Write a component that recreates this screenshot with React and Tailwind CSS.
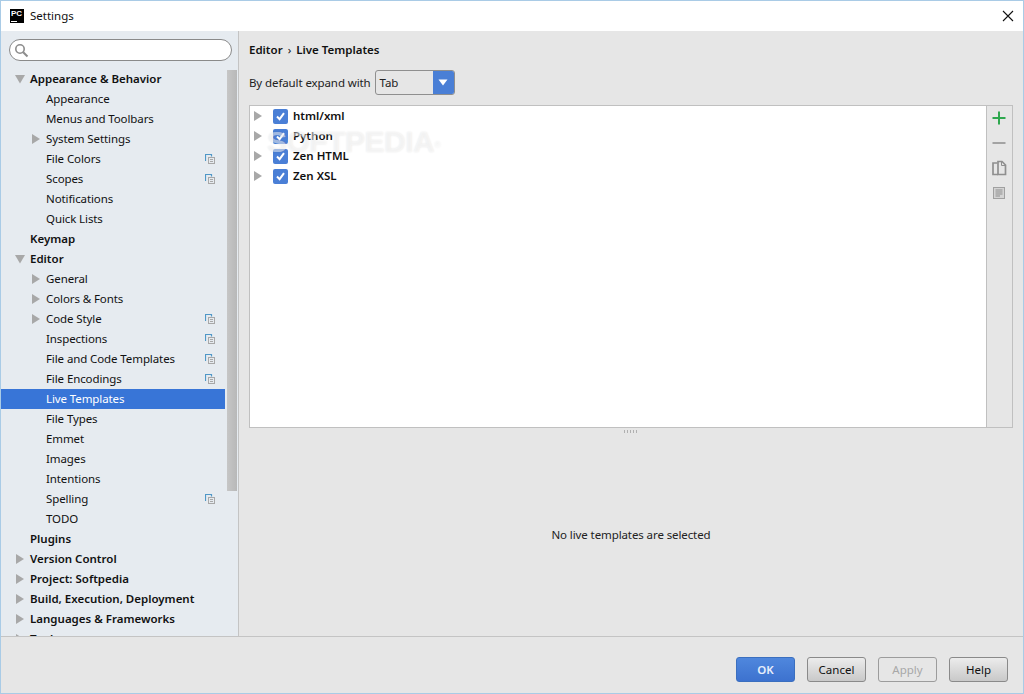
const sans = "font-['Noto_Sans','Open_Sans',sans-serif]";

function Arrow({ dir = "right", x = "" }) {
  return (
    <svg width="10" height="10" viewBox="0 0 10 10" className={`shrink-0 ${x}`}>
      {dir === "right" ? <path d="M1 0 L9 5 L1 10 Z" fill="#a8a8a8" /> : <path d="M0 1 L10 1 L5 9.5 Z" fill="#a8a8a8" />}
    </svg>
  );
}

function CopyBadge() {
  return (
    <svg width="10" height="10" viewBox="0 0 10 10" className="shrink-0">
      <path d="M0.5 7 V0.5 H6.5 V2.5" fill="none" stroke="#4f97c7" strokeWidth="1.2" />
      <rect x="3.5" y="3.5" width="6" height="6" fill="#e6ebf0" stroke="#a8a8a8" />
      <path d="M5 5.5 H8 M5 7.5 H8" stroke="#a8a8a8" strokeWidth="1" />
    </svg>
  );
}

const rows = [
  { t: "Appearance & Behavior", b: 1, a: "down" },
  { t: "Appearance" },
  { t: "Menus and Toolbars" },
  { t: "System Settings", a: "right" },
  { t: "File Colors", c: 1 },
  { t: "Scopes", c: 1 },
  { t: "Notifications" },
  { t: "Quick Lists" },
  { t: "Keymap", b: 1 },
  { t: "Editor", b: 1, a: "down" },
  { t: "General", a: "right" },
  { t: "Colors & Fonts", a: "right" },
  { t: "Code Style", a: "right", c: 1 },
  { t: "Inspections", c: 1 },
  { t: "File and Code Templates", c: 1 },
  { t: "File Encodings", c: 1 },
  { t: "Live Templates", s: 1 },
  { t: "File Types" },
  { t: "Emmet" },
  { t: "Images" },
  { t: "Intentions" },
  { t: "Spelling", c: 1 },
  { t: "TODO" },
  { t: "Plugins", b: 1 },
  { t: "Version Control", b: 1, a: "right" },
  { t: "Project: Softpedia", b: 1, a: "right" },
  { t: "Build, Execution, Deployment", b: 1, a: "right" },
  { t: "Languages & Frameworks", b: 1, a: "right" },
  { t: "Tools", b: 1, a: "right" },
];

function TreeRow({ r }) {
  const top = r.b;
  return (
    <div className={`h-5 shrink-0 flex items-center relative ${r.s ? "bg-[#3875d7] text-white" : "text-[#111]"}`}>
      <div className={`${top ? "w-[29px] pl-[14px]" : "w-[45px] pl-[30px]"} shrink-0 flex items-center`}>
        {r.a && <Arrow dir={r.a} />}
      </div>
      <span className={`text-[11.5px] whitespace-nowrap flex-1 ${top ? "font-semibold" : "tracking-[-0.1px]"}`}>{r.t}</span>
      {r.c && <div className="w-[20px] shrink-0"><CopyBadge /></div>}
    </div>
  );
}

function Sidebar() {
  return (
    <div className="w-[238px] shrink-0 bg-[#e6ebf0] border-r border-[#c4c4c4] flex flex-col overflow-hidden">
      <div className="h-[30px] shrink-0 flex items-end pl-2 pr-[6px]">
        <div className="h-[22px] w-full bg-white border border-[#8a8a8a] rounded-full flex items-center pl-1">
          <svg width="15" height="15" viewBox="0 0 15 15">
            <circle cx="6" cy="6" r="4.2" fill="none" stroke="#8c8c8c" strokeWidth="1.6" />
            <path d="M9.2 9.2 L13.5 13.5" stroke="#8c8c8c" strokeWidth="2" />
          </svg>
        </div>
      </div>
      <div className="flex-1 flex min-h-0 pt-[8px]">
        <div className="w-[224px] shrink-0 flex flex-col overflow-hidden">
          {rows.map((r) => <TreeRow key={r.t} r={r} />)}
        </div>
        <div className="w-[12px] shrink-0 pl-[2px]">
          <div className="w-[10px] h-[421px] mt-[1px] bg-gradient-to-r from-[#c6c6c6] to-[#b8b8b8]" />
        </div>
      </div>
    </div>
  );
}

function Check() {
  return (
    <div className="w-[15px] h-[15px] rounded-[2px] bg-[#4a7fd6] flex items-center justify-center shrink-0">
      <svg width="11" height="11" viewBox="0 0 11 11">
        <path d="M2 5.5 L4.6 8.2 L9 2.2" fill="none" stroke="#fff" strokeWidth="2" />
      </svg>
    </div>
  );
}

function TemplateRow({ t }) {
  return (
    <div className="h-5 flex items-center pl-[3px]">
      <Arrow x="mr-[10px]" />
      <Check />
      <span className="ml-[5px] text-[11.5px] font-semibold text-[#111]">{t}</span>
    </div>
  );
}

function Toolbar() {
  return (
    <div className="w-[26px] shrink-0 border-l border-[#c0c0c0] bg-[#e6e6e6] flex flex-col items-center pt-[2px] gap-[5px]">
      <svg width="20" height="20" viewBox="0 0 20 20" className="-translate-x-[1px]"><path d="M10 3.5 V16.5 M3.5 10 H16.5" stroke="#2fa84f" strokeWidth="2" /></svg>
      <svg width="20" height="20" viewBox="0 0 20 20" className="-translate-x-[1px]"><path d="M3.5 10 H16.5" stroke="#a3a3a3" strokeWidth="2" /></svg>
      <svg width="20" height="20" viewBox="0 0 20 20" fill="none" stroke="#8f8f8f" className="-translate-x-[1px]">
        <path d="M9 16.5 H4 V5 H8.5" strokeWidth="1.7" />
        <path d="M9 16.5 V3.5 H13 L16.5 7 V16.5 Z" strokeWidth="1.7" />
        <path d="M12.5 3.5 V7.5 H16.5" strokeWidth="1" />
      </svg>
      <svg width="20" height="20" viewBox="0 0 20 20" className="-translate-x-[1px]">
        <rect x="4.5" y="4.5" width="11" height="11" fill="#d4d4d4" stroke="#a0a0a0" />
        <path d="M6.5 7 H13.5 M6.5 9 H13.5 M6.5 11 H13.5 M6.5 13 H11" stroke="#8f8f8f" />
      </svg>
    </div>
  );
}

function Btn({ children, kind }) {
  const cls =
    kind === "ok"
      ? "bg-gradient-to-b from-[#4f87dd] to-[#3d72cf] border-[#3b6fbf] text-[#e8eefb] font-semibold"
      : kind === "off"
      ? "bg-[#e6e6e6] border-[#9c9c9c] text-[#a8a8a8]"
      : "bg-gradient-to-b from-[#ececec] to-[#c9c9c9] border-[#8a8a8a] text-[#111]";
  return (
    <div className={`w-[59px] h-[25px] rounded-[3px] border flex items-center justify-center text-[11.5px] ${cls}`}>{children}</div>
  );
}

export default function App() {
  return (
    <div className={`w-[1024px] h-[694px] overflow-hidden border border-[#a9cbe6] bg-[#e6e6e6] flex flex-col ${sans}`}>
      <div className="h-[30px] shrink-0 bg-white flex items-center">
        <div className="ml-[9px] w-[14px] h-[14px] bg-black relative shrink-0 overflow-hidden">
          <span className="absolute left-[1px] top-[0px] text-[8px] leading-[10px] font-bold text-white font-['Liberation_Sans']">PC</span>
          <span className="absolute left-[1px] bottom-[1px] w-[6px] h-[1px] bg-white" />
        </div>
        <span className="ml-[6px] text-[11.5px] text-[#111]">Settings</span>
        <svg width="12" height="12" viewBox="0 0 12 12" className="ml-auto mr-[9px]">
          <path d="M1 1 L11 11 M11 1 L1 11" stroke="#111" strokeWidth="1.1" />
        </svg>
      </div>

      <div className="h-[605px] shrink-0 flex">
        <Sidebar />
        <div className="flex-1 flex flex-col pl-[10px] pr-[10px] relative">
          <div className="h-[30px] shrink-0 flex items-end pb-[3px] text-[11.5px] font-semibold text-[#111]">
            <span>Editor</span>
            <span className="mx-[5px] font-normal">›</span>
            <span>Live Templates</span>
          </div>
          <div className="mt-[9px] h-[25px] shrink-0 flex items-center text-[11.5px] tracking-[-0.1px] text-[#222]">
            <span>By default expand with</span>
            <div className="ml-[4px] w-[80px] h-[25px] flex rounded-[3px] border border-[#8f8f8f] overflow-hidden">
              <span className="flex-1 pl-[4px] flex items-center">Tab</span>
              <div className="w-[21px] bg-[#4a7fd6] flex items-center justify-center">
                <svg width="10" height="7" viewBox="0 0 10 7"><path d="M0.5 0.5 H9.5 L5 6.5 Z" fill="#fff" /></svg>
              </div>
            </div>
          </div>
          <div className="mt-[10px] h-[323px] shrink-0 flex border border-[#c0c0c0] bg-white">
            <div className="flex-1 flex flex-col">
              {["html/xml", "Python", "Zen HTML", "Zen XSL"].map((t) => <TemplateRow key={t} t={t} />)}
            </div>
            <Toolbar />
          </div>
          <div className="h-[7px] shrink-0 flex items-center justify-center">
            <div className="w-[15px] h-[3px] bg-[repeating-linear-gradient(90deg,#b0b0b0_0,#b0b0b0_1px,transparent_1px,transparent_3px)]" />
          </div>
          <div className="flex-1 flex items-center justify-center pb-[2px] text-[11.5px] tracking-[-0.1px] text-[#222]">
            No live templates are selected
          </div>
          <span className="absolute left-[28px] top-[94px] text-[30px] leading-[34px] font-bold tracking-[-0.5px] text-white/50 [text-shadow:0_0_2px_rgba(0,0,0,0.1)] font-['Liberation_Sans']">SOFTPEDIA<sup className="text-[9px] font-normal">®</sup></span>
        </div>
      </div>

      <div className="flex-1 border-t border-[#c4c4c4] flex justify-end items-start gap-3 pt-[20px] pr-[15px]">
        <Btn kind="ok">OK</Btn>
        <Btn>Cancel</Btn>
        <Btn kind="off">Apply</Btn>
        <Btn>Help</Btn>
      </div>
    </div>
  );
}
